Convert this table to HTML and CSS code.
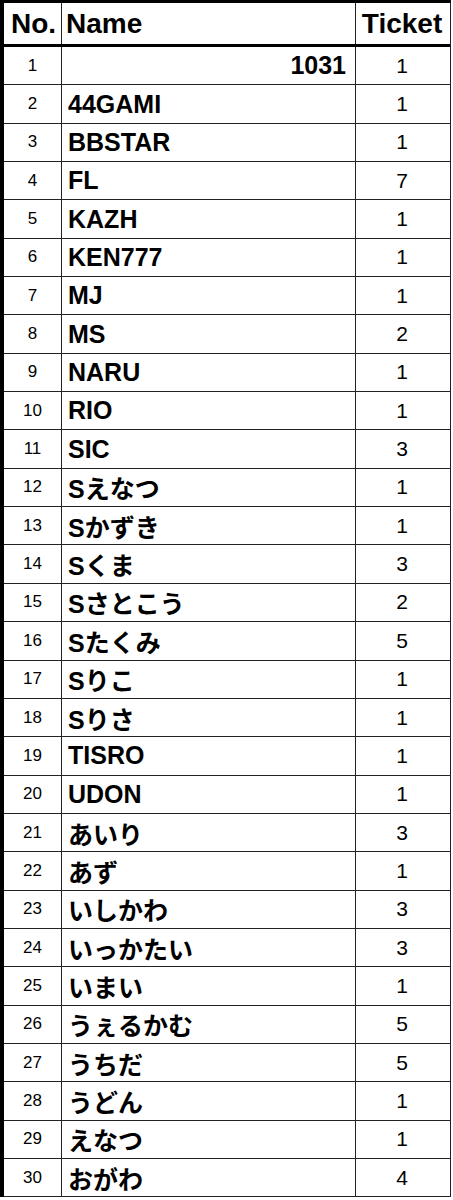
FILE: index.html
```html
<!DOCTYPE html>
<html lang="ja">
<head>
<meta charset="utf-8">
<title>Ticket list</title>
<link rel="stylesheet" href="styles.css">
</head>
<body>
<div class="sheet">
  <div class="row head">
    <div class="cell no">No.</div>
    <div class="cell name">Name</div>
    <div class="cell ticket">Ticket</div>
  </div>
  <div class="row"><div class="cell no">1</div><div class="cell name right">1031</div><div class="cell ticket">1</div></div>
  <div class="row"><div class="cell no">2</div><div class="cell name">44GAMI</div><div class="cell ticket">1</div></div>
  <div class="row"><div class="cell no">3</div><div class="cell name">BBSTAR</div><div class="cell ticket">1</div></div>
  <div class="row"><div class="cell no">4</div><div class="cell name">FL</div><div class="cell ticket">7</div></div>
  <div class="row"><div class="cell no">5</div><div class="cell name">KAZH</div><div class="cell ticket">1</div></div>
  <div class="row"><div class="cell no">6</div><div class="cell name">KEN777</div><div class="cell ticket">1</div></div>
  <div class="row"><div class="cell no">7</div><div class="cell name">MJ</div><div class="cell ticket">1</div></div>
  <div class="row"><div class="cell no">8</div><div class="cell name">MS</div><div class="cell ticket">2</div></div>
  <div class="row"><div class="cell no">9</div><div class="cell name">NARU</div><div class="cell ticket">1</div></div>
  <div class="row"><div class="cell no">10</div><div class="cell name">RIO</div><div class="cell ticket">1</div></div>
  <div class="row"><div class="cell no">11</div><div class="cell name">SIC</div><div class="cell ticket">3</div></div>
  <div class="row"><div class="cell no">12</div><div class="cell name">Sえなつ</div><div class="cell ticket">1</div></div>
  <div class="row"><div class="cell no">13</div><div class="cell name">Sかずき</div><div class="cell ticket">1</div></div>
  <div class="row"><div class="cell no">14</div><div class="cell name">Sくま</div><div class="cell ticket">3</div></div>
  <div class="row"><div class="cell no">15</div><div class="cell name">Sさとこう</div><div class="cell ticket">2</div></div>
  <div class="row"><div class="cell no">16</div><div class="cell name">Sたくみ</div><div class="cell ticket">5</div></div>
  <div class="row"><div class="cell no">17</div><div class="cell name">Sりこ</div><div class="cell ticket">1</div></div>
  <div class="row"><div class="cell no">18</div><div class="cell name">Sりさ</div><div class="cell ticket">1</div></div>
  <div class="row"><div class="cell no">19</div><div class="cell name">TISRO</div><div class="cell ticket">1</div></div>
  <div class="row"><div class="cell no">20</div><div class="cell name">UDON</div><div class="cell ticket">1</div></div>
  <div class="row"><div class="cell no">21</div><div class="cell name">あいり</div><div class="cell ticket">3</div></div>
  <div class="row"><div class="cell no">22</div><div class="cell name">あず</div><div class="cell ticket">1</div></div>
  <div class="row"><div class="cell no">23</div><div class="cell name">いしかわ</div><div class="cell ticket">3</div></div>
  <div class="row"><div class="cell no">24</div><div class="cell name">いっかたい</div><div class="cell ticket">3</div></div>
  <div class="row"><div class="cell no">25</div><div class="cell name">いまい</div><div class="cell ticket">1</div></div>
  <div class="row"><div class="cell no">26</div><div class="cell name">うぇるかむ</div><div class="cell ticket">5</div></div>
  <div class="row"><div class="cell no">27</div><div class="cell name">うちだ</div><div class="cell ticket">5</div></div>
  <div class="row"><div class="cell no">28</div><div class="cell name">うどん</div><div class="cell ticket">1</div></div>
  <div class="row"><div class="cell no">29</div><div class="cell name">えなつ</div><div class="cell ticket">1</div></div>
  <div class="row"><div class="cell no">30</div><div class="cell name">おがわ</div><div class="cell ticket">4</div></div>
</div>
</body>
</html>
```
FILE: styles.css
```css
html, body {
  margin: 0;
  padding: 0;
  background: #ffffff;
}

body {
  font-family: "Liberation Sans", Arial, "Noto Sans CJK JP", sans-serif;
  color: #000;
}

.sheet {
  width: 446px;
  border-left: 4px solid #000;
  border-top: 3px solid #000;
  border-right: 1px solid #222;
}

.row {
  display: grid;
  grid-template-columns: 58px 294px 92px;
  height: 38.35px;
  box-sizing: border-box;
  border-bottom: 1px solid #222;
}

.row.head {
  height: 44px;
  border-bottom: 3px solid #000;
}

.cell {
  display: flex;
  align-items: center;
  justify-content: center;
  overflow: hidden;
  white-space: nowrap;
}

.cell.no,
.cell.name {
  border-right: 1px solid #222;
}

.cell.no {
  font-size: 17px;
}

.cell.name {
  justify-content: flex-start;
  padding-left: 6px;
  padding-right: 9px;
  font-size: 25px;
  font-weight: bold;
}

.cell.name.right {
  justify-content: flex-end;
}

.cell.ticket {
  font-size: 21px;
}

.head .cell {
  font-size: 28px;
  font-weight: bold;
}

.head .cell.no {
  justify-content: center;
  padding-left: 2px;
}

.head .cell.name {
  padding-left: 4px;
}
```
